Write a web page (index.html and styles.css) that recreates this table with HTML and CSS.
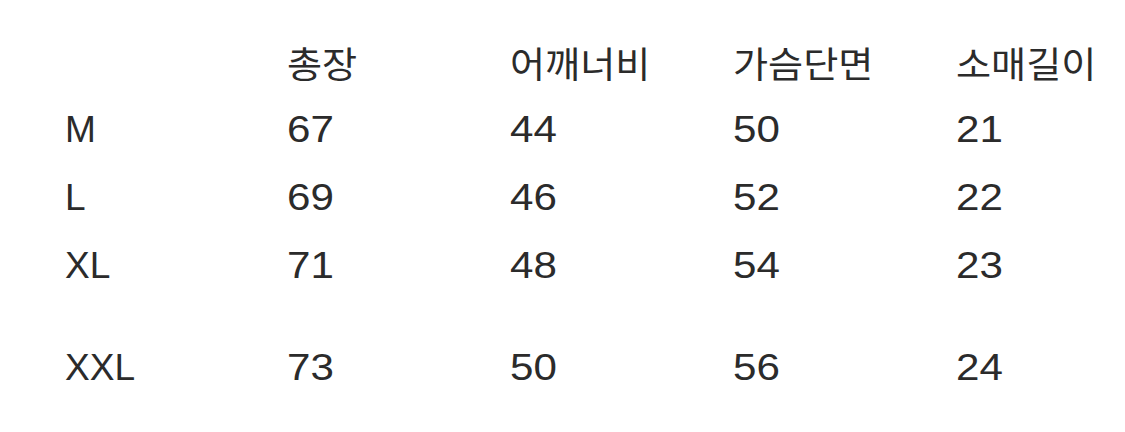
FILE: index.html
```html
<!DOCTYPE html>
<html lang="ko">
<head>
<meta charset="utf-8">
<link rel="stylesheet" href="styles.css">
</head>
<body>
<div class="size-table">
  <div class="row head">
    <div class="cell"></div>
    <div class="cell"><span class="ko">총장</span></div>
    <div class="cell"><span class="ko">어깨너비</span></div>
    <div class="cell"><span class="ko">가슴단면</span></div>
    <div class="cell"><span class="ko">소매길이</span></div>
  </div>
  <div class="row">
    <div class="cell"><span class="label">M</span></div><div class="cell"><span class="num">67</span></div><div class="cell"><span class="num">44</span></div><div class="cell"><span class="num">50</span></div><div class="cell"><span class="num">21</span></div>
  </div>
  <div class="row">
    <div class="cell"><span class="label">L</span></div><div class="cell"><span class="num">69</span></div><div class="cell"><span class="num">46</span></div><div class="cell"><span class="num">52</span></div><div class="cell"><span class="num">22</span></div>
  </div>
  <div class="row">
    <div class="cell"><span class="label">XL</span></div><div class="cell"><span class="num">71</span></div><div class="cell"><span class="num">48</span></div><div class="cell"><span class="num">54</span></div><div class="cell"><span class="num">23</span></div>
  </div>
  <div class="row last">
    <div class="cell"><span class="label">XXL</span></div><div class="cell"><span class="num">73</span></div><div class="cell"><span class="num">50</span></div><div class="cell"><span class="num">56</span></div><div class="cell"><span class="num">24</span></div>
  </div>
</div>
</body>
</html>
```
FILE: styles.css
```css
html, body {
  margin: 0;
  padding: 0;
  background: #ffffff;
}
body {
  width: 1125px;
  height: 432px;
  overflow: hidden;
}
.size-table {
  padding: 28px 0 0 65px;
  font-family: "Liberation Sans", Arial, "Noto Sans CJK KR", sans-serif;
  font-size: 36px;
  color: #2b2b2b;
}
.row {
  display: grid;
  grid-template-columns: 222px 223px 223px 223px 223px;
  height: 68px;
  line-height: 68px;
}
.row.last {
  margin-top: 34px;
}
.cell {
  white-space: nowrap;
}
.num,
.label,
.ko {
  display: inline-block;
  transform-origin: left center;
}
.num {
  transform: scaleX(1.17);
}
.label {
  transform: scaleX(1.03);
}
.ko {
  font-family: "Noto Sans CJK KR", sans-serif;
  transform: scaleX(1.06);
}
```
